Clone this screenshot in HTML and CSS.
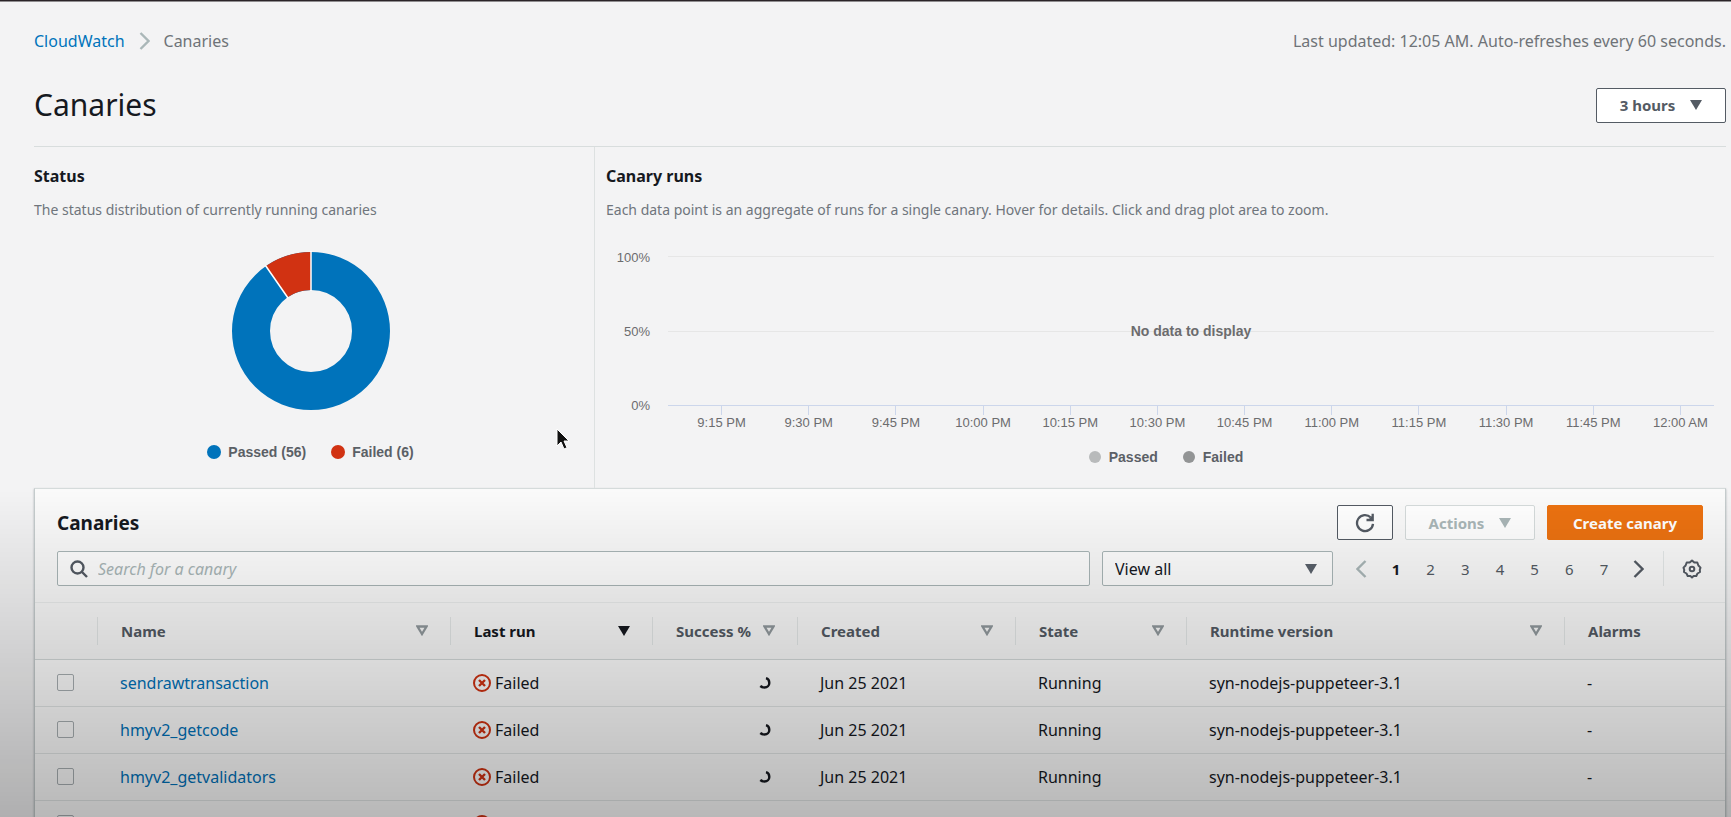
FILE: index.html
```html
<!DOCTYPE html>
<html lang="en">
<head>
<meta charset="utf-8">
<title>CloudWatch Canaries</title>
<link rel="stylesheet" href="styles.css">
</head>
<body>
<svg class="sprite" aria-hidden="true">
  <symbol id="caret" viewBox="0 0 12 10"><path d="M0 0h12L6 10z" fill="currentColor"/></symbol>
  <symbol id="sort" viewBox="0 0 12 11"><path d="M1.500 1.500h9L6 9z" fill="none" stroke="currentColor" stroke-width="2.300"/></symbol>
  <symbol id="failed" viewBox="0 0 18 18"><g fill="none" stroke="currentColor" stroke-width="2"><circle cx="9" cy="9" r="8"/><path d="M6 6l6 6M12 6l-6 6" stroke-width="2.400"/></g></symbol>
  <symbol id="spinner" viewBox="0 0 12 14"><path d="M7 2.200C9.200 2.800 10.300 4.700 10.300 7 10.300 9.600 8.300 11.500 5.500 11.500 3.700 11.500 2.300 10.900 1.300 10" fill="none" stroke="currentColor" stroke-width="2.400"/></symbol>
</svg>

<main class="page">
  <header class="topline">
    <nav class="breadcrumb" aria-label="Breadcrumb">
      <a href="#">CloudWatch</a>
      <svg class="crumb-sep" viewBox="0 0 11 18" aria-hidden="true"><path d="M1.500 1l8 8-8 8" fill="none" stroke="currentColor" stroke-width="2.400"/></svg>
      <span>Canaries</span>
    </nav>
    <span>Last updated: 12:05 AM. Auto-refreshes every 60 seconds.</span>
  </header>

  <div class="heading">
    <h1>Canaries</h1>
    <button class="btn btn-range" type="button">3 hours <svg class="caret" aria-hidden="true"><use href="#caret"/></svg></button>
  </div>

  <div class="overview">
    <section class="status">
      <h2>Status</h2>
      <p class="note">The status distribution of currently running canaries</p>
      <svg class="donut" viewBox="-80 -80 160 160" role="img" aria-label="56 passed, 6 failed">
        <circle r="60" fill="none" stroke="#0073bb" stroke-width="38"/>
        <path d="M0 -79A79 79 0 0 0 -45.100 -64.900L-23.400 -33.700A41 41 0 0 1 0 -41z" fill="#d13212"/>
        <path d="M0 -80V-40M-45.700 -65.700L-22.800 -32.800" stroke="#fff" stroke-width="1.500"/>
      </svg>
      <ul class="legend">
        <li><span class="dot dot-pass"></span>Passed (56)</li>
        <li><span class="dot dot-fail"></span>Failed (6)</li>
      </ul>
    </section>

    <section class="runs">
      <h2>Canary runs</h2>
      <p class="note">Each data point is an aggregate of runs for a single canary. Hover for details. Click and drag plot area to zoom.</p>
      <div class="chart">
        <div class="y-axis"><span>100%</span><span>50%</span><span>0%</span></div>
        <div class="plot"><strong>No data to display</strong></div>
        <div class="x-axis">
          <span>9:15 PM</span><span>9:30 PM</span><span>9:45 PM</span><span>10:00 PM</span><span>10:15 PM</span><span>10:30 PM</span><span>10:45 PM</span><span>11:00 PM</span><span>11:15 PM</span><span>11:30 PM</span><span>11:45 PM</span><span>12:00 AM</span>
        </div>
      </div>
      <ul class="legend legend-small">
        <li><span class="dot dot-light"></span>Passed</li>
        <li><span class="dot dot-dark"></span>Failed</li>
      </ul>
    </section>
  </div>

  <section class="panel">
    <div class="panel-head">
      <div class="bar">
        <h2 class="panel-title">Canaries</h2>
        <div class="actions">
          <button class="btn btn-icon" type="button" aria-label="Refresh">
            <svg class="refresh" viewBox="0 0 20 20" aria-hidden="true"><path d="M18 10.800A8 8 0 1 1 15.800 4.500" fill="none" stroke="currentColor" stroke-width="2.300"/><path d="M17.700 .8V7H11.500" fill="none" stroke="currentColor" stroke-width="2.300"/><path d="M18 2v5h-5z" fill="currentColor"/></svg>
          </button>
          <button class="btn btn-actions" type="button" disabled>Actions <svg class="caret" aria-hidden="true"><use href="#caret"/></svg></button>
          <button class="btn btn-primary" type="button">Create canary</button>
        </div>
      </div>
      <div class="bar filters">
        <label class="search">
          <svg class="search-icon" viewBox="0 0 18 18" aria-hidden="true"><g fill="none" stroke="currentColor" stroke-width="2.400"><circle cx="7.500" cy="7.500" r="6"/><path d="M12 12l5 5"/></g></svg>
          <input type="search" placeholder="Search for a canary" aria-label="Search for a canary">
        </label>
        <div class="select">
          <select aria-label="View"><option>View all</option></select>
          <svg class="caret" aria-hidden="true"><use href="#caret"/></svg>
        </div>
        <nav class="pages" aria-label="Pages">
          <button type="button" class="prev" aria-label="Previous page" disabled><svg class="chev" viewBox="0 0 11 18"><path d="M9.500 1l-8 8 8 8" fill="none" stroke="currentColor" stroke-width="2.400"/></svg></button>
          <button type="button" class="current">1</button>
          <button type="button">2</button>
          <button type="button">3</button>
          <button type="button">4</button>
          <button type="button">5</button>
          <button type="button">6</button>
          <button type="button">7</button>
          <button type="button" class="next" aria-label="Next page"><svg class="chev" viewBox="0 0 11 18"><path d="M1.500 1l8 8-8 8" fill="none" stroke="currentColor" stroke-width="2.400"/></svg></button>
        </nav>
        <button class="settings" type="button" aria-label="Preferences">
          <svg class="gear" viewBox="0 0 20 20" aria-hidden="true"><g fill="none" stroke="currentColor" stroke-width="2" stroke-linejoin="round"><path d="M10 1.500L12.300 3.600L15.300 3.500L16.400 6.500L18.500 8.600L17.800 10.800L18 13L15.500 14.500L14.300 17L11.600 17.100L10 18.500L8.400 17.100L5.700 17L4.500 14.500L2 13L2.200 10.800L1.500 8.600L3.600 6.500L4.700 3.500L7.700 3.600z"/><circle cx="10" cy="10" r="2.300"/></g></svg>
        </button>
      </div>
    </div>

    <table class="grid">
      <colgroup><col class="c-check"><col class="c-name"><col class="c-run"><col class="c-success"><col class="c-created"><col class="c-state"><col class="c-runtime"><col class="c-alarms"></colgroup>
      <thead>
        <tr>
          <th aria-label="Select"></th>
          <th><div class="th">Name <svg class="sort"><use href="#sort"/></svg></div></th>
          <th class="sorted"><div class="th">Last run <svg class="caret"><use href="#caret"/></svg></div></th>
          <th><div class="th">Success % <svg class="sort"><use href="#sort"/></svg></div></th>
          <th><div class="th">Created <svg class="sort"><use href="#sort"/></svg></div></th>
          <th><div class="th">State <svg class="sort"><use href="#sort"/></svg></div></th>
          <th><div class="th">Runtime version <svg class="sort"><use href="#sort"/></svg></div></th>
          <th><div class="th">Alarms</div></th>
        </tr>
      </thead>
      <tbody>
        <tr>
          <td><input type="checkbox" aria-label="Select sendrawtransaction"></td>
          <td><a href="#">sendrawtransaction</a></td>
          <td><span class="fail"><svg><use href="#failed"/></svg>Failed</span></td>
          <td class="num"><svg class="spinner"><use href="#spinner"/></svg></td>
          <td>Jun 25 2021</td><td>Running</td><td>syn-nodejs-puppeteer-3.1</td><td>-</td>
        </tr>
        <tr>
          <td><input type="checkbox" aria-label="Select hmyv2_getcode"></td>
          <td><a href="#">hmyv2_getcode</a></td>
          <td><span class="fail"><svg><use href="#failed"/></svg>Failed</span></td>
          <td class="num"><svg class="spinner"><use href="#spinner"/></svg></td>
          <td>Jun 25 2021</td><td>Running</td><td>syn-nodejs-puppeteer-3.1</td><td>-</td>
        </tr>
        <tr>
          <td><input type="checkbox" aria-label="Select hmyv2_getvalidators"></td>
          <td><a href="#">hmyv2_getvalidators</a></td>
          <td><span class="fail"><svg><use href="#failed"/></svg>Failed</span></td>
          <td class="num"><svg class="spinner"><use href="#spinner"/></svg></td>
          <td>Jun 25 2021</td><td>Running</td><td>syn-nodejs-puppeteer-3.1</td><td>-</td>
        </tr>
        <tr>
          <td><input type="checkbox" aria-label="Select canary"></td>
          <td></td>
          <td><span class="fail"><svg><use href="#failed"/></svg></span></td>
          <td></td><td></td><td></td><td></td><td></td>
        </tr>
      </tbody>
    </table>
  </section>
</main>

<svg class="pointer" viewBox="0 0 14 22" aria-hidden="true"><path d="M1 1v17l4-4 3 7 3-1.300-3-6.700h5z" fill="#111" stroke="#fff" stroke-width="1"/></svg>
</body>
</html>
```

FILE: styles.css
```css
* { box-sizing: border-box; }

body {
  margin: 0;
  height: 100vh;
  overflow: hidden;
  border-top: 1px solid #2a2428;
  background: #f3f3f4;
  color: #16191f;
  font: 15px/22px "Noto Sans", "Open Sans", sans-serif;
}

/* shade that darkens the lower part of the window */
body::after {
  content: "";
  position: fixed;
  inset: 60% 0 0;
  background: linear-gradient(rgba(0, 0, 0, 0), rgba(0, 0, 0, .28));
  pointer-events: none;
}

h1, h2, p, ul { margin: 0; padding: 0; }
a { color: #0073bb; text-decoration: none; }
button, input, select { font: inherit; color: inherit; margin: 0; }
svg { display: block; flex: none; }

.sprite { position: absolute; width: 0; height: 0; }
.page { padding: 28px 5px 0 34px; border-top: 1px solid #8f8d8f; }

.topline, .heading, .bar {
  display: flex;
  align-items: center;
  justify-content: space-between;
}
.topline { color: #6f7378; font-size: 16px; }
.breadcrumb { display: flex; align-items: center; gap: 14px; }
.crumb-sep { width: 11px; height: 18px; color: #aab7b8; }

.heading { padding: 34px 0 22px; border-bottom: 1px solid #d8dddd; }
h1 { font-size: 30px; line-height: 38px; font-weight: 400; }
h2 { font-size: 16px; line-height: 22px; font-weight: 700; }

.btn {
  display: flex;
  align-items: center;
  justify-content: center;
  height: 35px;
  padding: 0 20px;
  gap: 15px;
  border: 1px solid #545b64;
  border-radius: 2px;
  background: #fff;
  color: #545b64;
  font-weight: 700;
}
.btn-range { width: 130px; }
.btn-icon { width: 56px; }
.btn-actions { width: 130px; border-color: #d5dbdb; color: #aab7b8; }
.btn-primary { width: 156px; padding: 0; border-color: #ec7211; background: #ec7211; color: #fff; }
.caret { width: 12px; height: 10px; }
.refresh { width: 20px; height: 20px; }

.overview { display: grid; grid-template-columns: 561px 1fr; }
.status { padding: 18px 7px 0 0; border-right: 1px solid #dde1e1; }
.runs { padding: 18px 0 20px 11px; }
.note { margin-top: 12px; color: #6f757c; font-size: 14px; }

.donut { width: 160px; height: 160px; margin: 30px auto 0; }
.legend {
  display: flex;
  justify-content: center;
  gap: 25px;
  margin-top: 30px;
  list-style: none;
  color: #5b6066;
  font: 700 14px/22px "Liberation Sans", Arial, sans-serif;
}
.legend li { display: flex; align-items: center; gap: 7px; }
.legend-small { margin-top: 15px; }
.legend-small li { gap: 8px; }
.dot { width: 14px; height: 14px; border-radius: 50%; }
.legend-small .dot { width: 12px; height: 12px; }
.dot-pass { background: #0073bb; }
.dot-fail { background: #d13212; }
.dot-light { background: #b8babb; }
.dot-dark { background: #929495; }

.chart {
  display: grid;
  grid-template-columns: 44px 1fr;
  column-gap: 18px;
  margin-top: 35px;
  padding-right: 12px;
  color: #6c6c6e;
  font: 13px/16px "Liberation Sans", Arial, sans-serif;
}
.y-axis {
  display: flex;
  flex-direction: column;
  justify-content: space-between;
  margin: -6px 0 -8px;
  text-align: right;
}
.plot {
  display: grid;
  place-items: center;
  height: 150px;
  border-top: 1px solid #e6e6e6;
  border-bottom: 1px solid #ccd6eb;
  background: linear-gradient(#e6e6e6, #e6e6e6) center / 100% 1px no-repeat;
  font-size: 14px;
}
.x-axis {
  grid-column: 2;
  display: grid;
  grid-template-columns: repeat(12, 1fr);
  margin: 0 -10px 0 10px;
  text-align: center;
}
.x-axis span::before {
  content: "";
  display: block;
  width: 1px;
  height: 9px;
  margin: 0 auto;
  background: #ccd6eb;
}

.panel {
  border: 1px solid #c5cccd;
  border-top-color: #d5dbdb;
  background: #fff;
  box-shadow: 0 1px 2px rgba(0, 28, 36, .3);
}
.panel-head { padding: 16px 22px; background: #fafafa; border-bottom: 1px solid #eaeded; }
.panel-title { font-size: 19px; }
.actions { display: flex; gap: 12px; }
.filters { margin-top: 11px; }

.search {
  display: flex;
  flex: 1;
  align-items: center;
  height: 35px;
  margin-right: 12px;
  padding: 0 12px;
  gap: 10px;
  border: 1px solid #aab7b8;
  border-radius: 2px;
  background: #fff;
}
.search input { flex: 1; min-width: 0; padding: 0; border: 0; outline: 0; background: none; font-size: 16px; }
.search input::placeholder { color: #aab7b8; font-style: italic; opacity: 1; }
.search-icon { width: 18px; height: 18px; color: #545b64; }

.select { display: grid; width: 231px; height: 35px; align-items: center; }
.select > * { grid-area: 1 / 1; }
.select select {
  width: 100%;
  height: 100%;
  padding: 0 12px;
  appearance: none;
  border: 1px solid #aab7b8;
  border-radius: 2px;
  background: #fff;
  font-size: 16px;
}
.select .caret { justify-self: end; margin-right: 16px; color: #545b64; pointer-events: none; z-index: 1; }

.pages { display: grid; grid-template-columns: repeat(9, 1fr); width: 312px; margin: 0 7px 0 11px; }
.pages button, .settings {
  display: grid;
  place-items: center;
  height: 35px;
  padding: 0;
  border: 0;
  background: none;
  color: #545b64;
}
.pages .current { color: #16191f; font-weight: 700; }
.pages .prev { color: #aab7b8; }
.chev { width: 11px; height: 18px; }
.settings { width: 40px; padding-left: 17px; border-left: 1px solid #e4e8e8; }
.gear { width: 20px; height: 20px; }

.grid { width: 100%; table-layout: fixed; border-collapse: collapse; }
.c-check { width: 62px; }
.c-name { width: 353px; }
.c-run { width: 202px; }
.c-success { width: 145px; }
.c-created { width: 218px; }
.c-state { width: 171px; }
.c-runtime { width: 378px; }

.grid th { height: 56px; padding: 0; background: #fafafa; color: #545b64; text-align: left; }
.grid thead tr { border-bottom: 1px solid #d5dbdb; }
.grid .sorted { color: #16191f; }
.th {
  display: flex;
  align-items: center;
  justify-content: space-between;
  height: 28px;
  padding: 0 22px 0 23px;
  border-left: 1px solid #e4e8e8;
}
.sort { width: 12px; height: 11px; color: #929a9e; }
.grid td { height: 47px; padding: 0 22px; border-bottom: 1px solid #e4e8e8; font-size: 16px; }
.grid td:not(:first-child) { padding-left: 23px; }
.grid td.num { padding-right: 26px; }
.spinner { width: 12px; height: 14px; margin-left: auto; }
.fail { display: flex; align-items: center; gap: 4px; }
.fail svg { width: 18px; height: 18px; color: #d13212; }
.grid input {
  display: block;
  width: 17px;
  height: 17px;
  appearance: none;
  border: 1px solid #aab1b4;
  border-radius: 2px;
  background: #fff;
}

.pointer { position: absolute; left: 556px; top: 428px; width: 14px; height: 22px; }
```
